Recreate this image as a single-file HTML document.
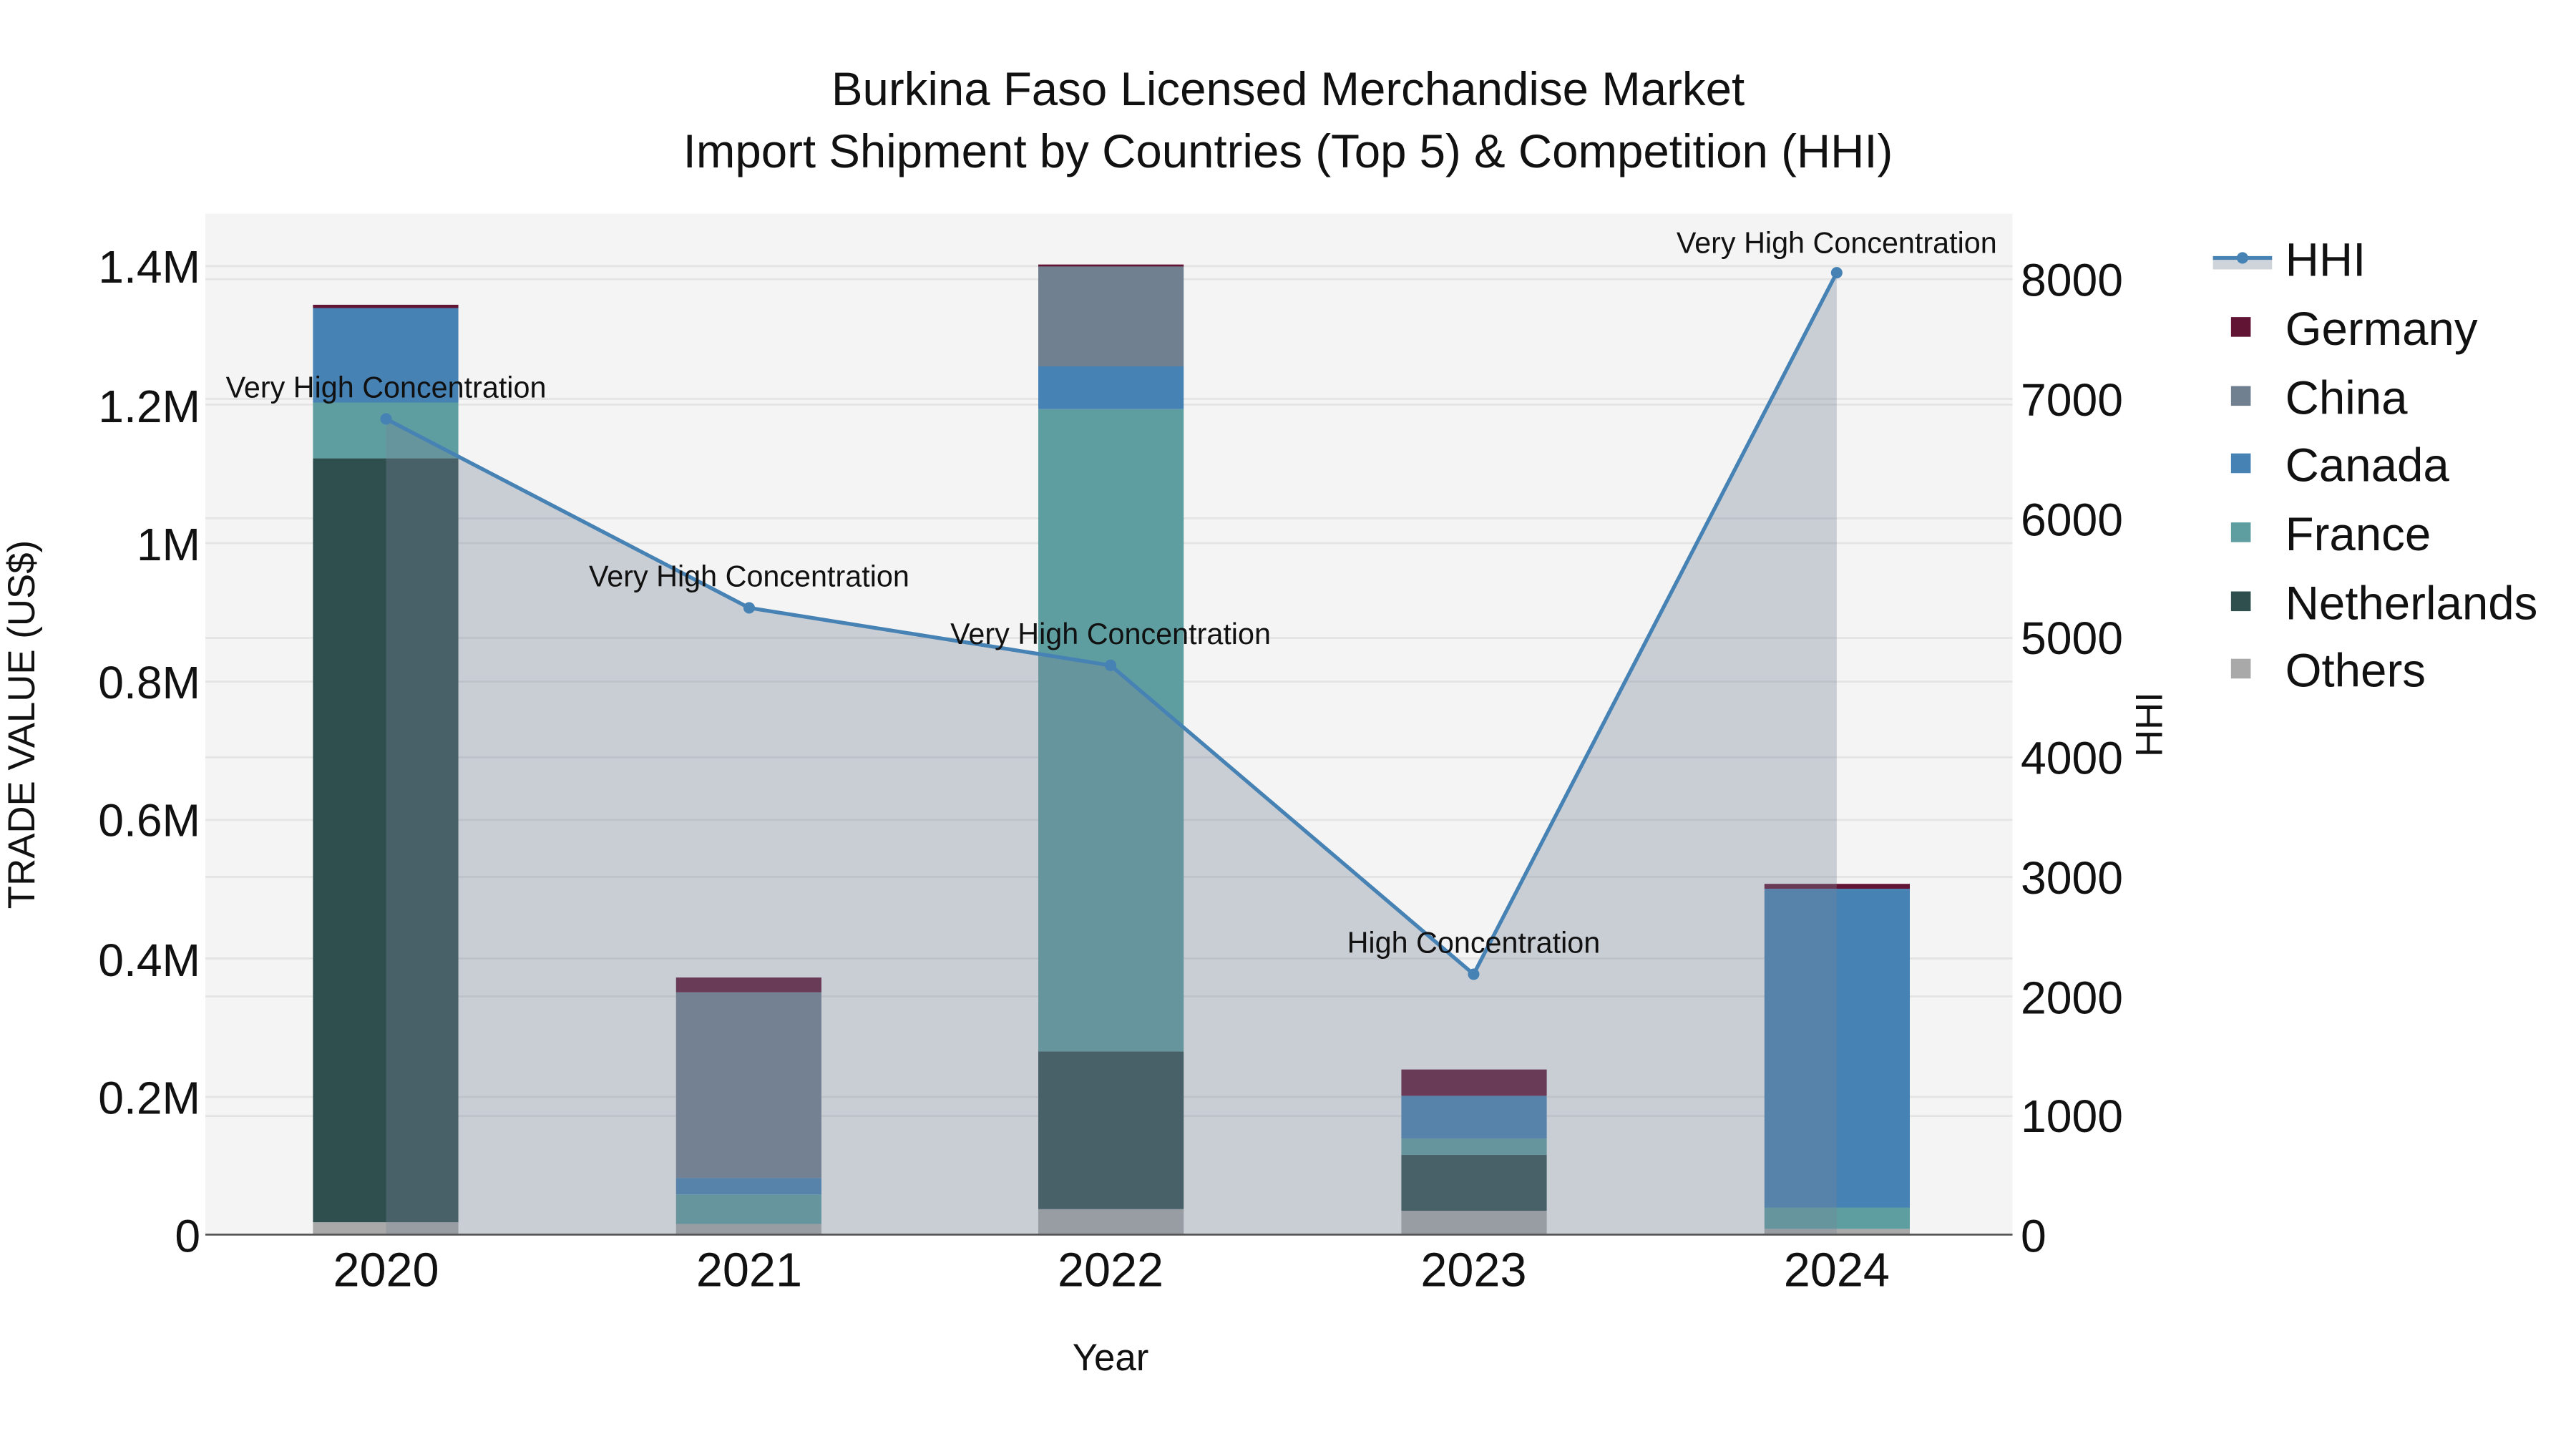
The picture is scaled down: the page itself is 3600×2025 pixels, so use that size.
<!DOCTYPE html>
<html><head><meta charset="utf-8"><style>html,body{margin:0;padding:0;background:#fff}svg{display:block}text{font-family:"Liberation Sans",sans-serif;fill:#111}</style></head><body>
<svg width="3600" height="2025" viewBox="0 0 1568 882" xmlns="http://www.w3.org/2000/svg">
<rect width="1568" height="882" fill="#fff"/>
<rect x="125" y="130" width="1100" height="622" fill="#f4f4f4"/>
<g stroke="#e4e4e4" stroke-width="1.2">
<line x1="125" x2="1225" y1="667.7" y2="667.7"/><line x1="125" x2="1225" y1="583.4" y2="583.4"/><line x1="125" x2="1225" y1="499.1" y2="499.1"/><line x1="125" x2="1225" y1="414.9" y2="414.9"/><line x1="125" x2="1225" y1="330.6" y2="330.6"/><line x1="125" x2="1225" y1="246.3" y2="246.3"/><line x1="125" x2="1225" y1="162" y2="162"/>
<line x1="125" x2="1225" y1="679.3" y2="679.3"/><line x1="125" x2="1225" y1="606.5" y2="606.5"/><line x1="125" x2="1225" y1="533.8" y2="533.8"/><line x1="125" x2="1225" y1="461" y2="461"/><line x1="125" x2="1225" y1="388.3" y2="388.3"/><line x1="125" x2="1225" y1="315.5" y2="315.5"/><line x1="125" x2="1225" y1="242.8" y2="242.8"/><line x1="125" x2="1225" y1="170" y2="170"/>
</g>
<g>
<rect x="190.5" y="744" width="88.5" height="8" fill="#a9a9a9"/><rect x="190.5" y="279" width="88.5" height="465" fill="#2f4f4f"/><rect x="190.5" y="245" width="88.5" height="34" fill="#5f9ea0"/><rect x="190.5" y="187.5" width="88.5" height="57.5" fill="#4682b4"/><rect x="190.5" y="185.5" width="88.5" height="2" fill="#621435"/>
<rect x="411.5" y="745" width="88.5" height="7" fill="#a9a9a9"/><rect x="411.5" y="727" width="88.5" height="18" fill="#5f9ea0"/><rect x="411.5" y="717" width="88.5" height="10" fill="#4682b4"/><rect x="411.5" y="604" width="88.5" height="113" fill="#708090"/><rect x="411.5" y="595" width="88.5" height="9" fill="#621435"/>
<rect x="632" y="736" width="88.5" height="16" fill="#a9a9a9"/><rect x="632" y="640" width="88.5" height="96" fill="#2f4f4f"/><rect x="632" y="249" width="88.5" height="391" fill="#5f9ea0"/><rect x="632" y="223" width="88.5" height="26" fill="#4682b4"/><rect x="632" y="162" width="88.5" height="61" fill="#708090"/><rect x="632" y="161" width="88.5" height="1.2" fill="#621435"/>
<rect x="853" y="737" width="88.5" height="15" fill="#a9a9a9"/><rect x="853" y="703" width="88.5" height="34" fill="#2f4f4f"/><rect x="853" y="693" width="88.5" height="10" fill="#5f9ea0"/><rect x="853" y="667" width="88.5" height="26" fill="#4682b4"/><rect x="853" y="651" width="88.5" height="16" fill="#621435"/>
<rect x="1074" y="748" width="88.5" height="4" fill="#a9a9a9"/><rect x="1074" y="735" width="88.5" height="13" fill="#5f9ea0"/><rect x="1074" y="541" width="88.5" height="194" fill="#4682b4"/><rect x="1074" y="538" width="88.5" height="3" fill="#621435"/>
</g>
<polygon points="235,752 235,255 456,370 676,405 897,593 1118,166 1118,752" fill="rgb(121,133,153)" fill-opacity="0.35"/>
<polyline points="235,255 456,370 676,405 897,593 1118,166" fill="none" stroke="#4682b4" stroke-width="2.3"/>
<g fill="#4682b4"><circle cx="235" cy="255" r="3.5"/><circle cx="456" cy="370" r="3.5"/><circle cx="676" cy="405" r="3.5"/><circle cx="897" cy="593" r="3.5"/><circle cx="1118" cy="166" r="3.5"/></g>
<line x1="125" x2="1225" y1="751.5" y2="751.5" stroke="#555" stroke-width="1.2"/>
<g font-size="18" text-anchor="middle">
<text x="235" y="242">Very High Concentration</text><text x="456" y="357">Very High Concentration</text><text x="676" y="392">Very High Concentration</text><text x="897" y="580">High Concentration</text><text x="1118" y="154">Very High Concentration</text>
</g>
<g font-size="28.5" text-anchor="middle"><text x="784" y="64">Burkina Faso Licensed Merchandise Market</text><text x="784" y="102">Import Shipment by Countries (Top 5) &amp; Competition (HHI)</text></g>
<g font-size="28" text-anchor="end">
<text x="122" y="762">0</text><text x="122" y="678">0.2M</text><text x="122" y="594">0.4M</text><text x="122" y="509">0.6M</text><text x="122" y="425">0.8M</text><text x="122" y="341">1M</text><text x="122" y="257">1.2M</text><text x="122" y="172">1.4M</text>
</g>
<g font-size="28" text-anchor="start">
<text x="1230" y="762">0</text><text x="1230" y="689">1000</text><text x="1230" y="617">2000</text><text x="1230" y="544">3000</text><text x="1230" y="471">4000</text><text x="1230" y="398">5000</text><text x="1230" y="326">6000</text><text x="1230" y="253">7000</text><text x="1230" y="180">8000</text>
</g>
<g font-size="29" text-anchor="middle"><text x="235" y="783">2020</text><text x="456" y="783">2021</text><text x="676" y="783">2022</text><text x="897" y="783">2023</text><text x="1118" y="783">2024</text></g>
<text x="676" y="834" font-size="23" text-anchor="middle">Year</text>
<text transform="translate(21,441) rotate(-90)" font-size="23" text-anchor="middle">TRADE VALUE (US$)</text>
<text transform="translate(1316,441) rotate(-90)" font-size="23" text-anchor="middle">HHI</text>
<rect x="1347" y="157" width="36" height="7" fill="#cfd4db"/>
<line x1="1347" x2="1383" y1="157" y2="157" stroke="#4682b4" stroke-width="2.3"/><circle cx="1365" cy="157" r="3.5" fill="#4682b4"/>
<rect x="1358" y="193" width="12" height="12" fill="#621435"/><rect x="1358" y="235" width="12" height="12" fill="#708090"/><rect x="1358" y="276" width="12" height="12" fill="#4682b4"/><rect x="1358" y="318" width="12" height="12" fill="#5f9ea0"/><rect x="1358" y="360" width="12" height="12" fill="#2f4f4f"/><rect x="1358" y="401" width="12" height="12" fill="#a9a9a9"/>
<g font-size="28.5"><text x="1391" y="168">HHI</text><text x="1391" y="210">Germany</text><text x="1391" y="252">China</text><text x="1391" y="293">Canada</text><text x="1391" y="335">France</text><text x="1391" y="377">Netherlands</text><text x="1391" y="418">Others</text></g>
</svg>
</body></html>
